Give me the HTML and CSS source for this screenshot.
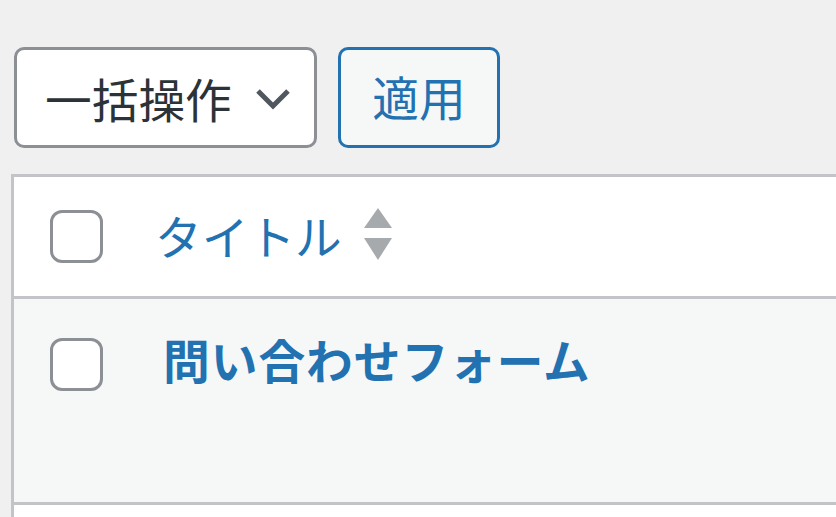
FILE: index.html
```html
<!DOCTYPE html>
<html lang="ja">
<head>
<meta charset="utf-8">
<link rel="stylesheet" href="styles.css">
</head>
<body>
<div class="tablenav">
  <div class="select">
    <span>一括操作</span>
    <svg class="chev" width="40" height="26" viewBox="0 0 40 26"><polyline points="4,5 19,20 34,5" fill="none" stroke="#50575e" stroke-width="5"/></svg>
  </div>
  <div class="apply">適用</div>
</div>
<div class="table">
  <div class="thead">
    <span class="cb"></span>
    <span class="th-title">タイトル</span>
    <svg class="sort" width="28" height="63" viewBox="0 0 28 63"><polygon points="0,23 14,3 28,23" fill="#a7aaad"/><polygon points="0,33 28,33 14,55" fill="#a7aaad"/></svg>
  </div>
  <div class="row">
    <span class="cb cb-row"></span>
    <span class="row-title">問い合わせフォーム</span>
  </div>
  <div class="row-empty"></div>
</div>
</body>
</html>
```
FILE: styles.css
```css
html, body {
  margin: 0;
  padding: 0;
  background: #f0f0f1;
  overflow: hidden;
  font-family: "Noto Sans CJK JP", "Noto Sans", sans-serif;
}
.tablenav {
  display: flex;
  gap: 21px;
  padding: 47px 0 0 14px;
}
.select {
  box-sizing: border-box;
  width: 303px;
  height: 101px;
  border: 3px solid #8c8f94;
  border-radius: 10px;
  background: #fff;
  color: #2c3338;
  font-size: 46.7px;
  display: flex;
  align-items: center;
  justify-content: space-between;
  padding: 0 20px 0 28px;
}
.chev { display: block; margin-top: 2px; }
.apply {
  box-sizing: border-box;
  width: 162px;
  height: 101px;
  border: 3px solid #2271b1;
  border-radius: 10px;
  background: #f6f7f7;
  color: #2271b1;
  font-size: 46.7px;
  display: flex;
  align-items: center;
  justify-content: center;
  padding-bottom: 4px;
}
.table {
  margin: 26px 0 0 11px;
  border: 3px solid #c3c4c7;
  border-right: none;
  border-bottom: none;
  background: #fff;
}
.thead {
  height: 119px;
  display: flex;
  align-items: center;
  border-bottom: 3px solid #c3c4c7;
}
.cb {
  box-sizing: border-box;
  width: 53px;
  height: 53px;
  border: 3px solid #8c8f94;
  border-radius: 12px;
  background: #fff;
  margin-left: 36px;
  flex: none;
}
.th-title {
  color: #2271b1;
  font-size: 46.7px;
  margin-left: 52px;
  margin-bottom: 4px;
}
.sort { margin-left: 22px; display: block; }
.row {
  height: 203px;
  background: #f6f7f7;
  border-bottom: 3px solid #c3c4c7;
  display: flex;
  align-items: flex-start;
}
.cb-row { margin-top: 39px; }
.row-title {
  margin: 33px 0 0 60px;
  line-height: 53px;
  font-size: 46.7px;
  font-weight: 700;
  letter-spacing: 1px;
  color: #2271b1;
}
.row-empty { height: 12px; }
```
